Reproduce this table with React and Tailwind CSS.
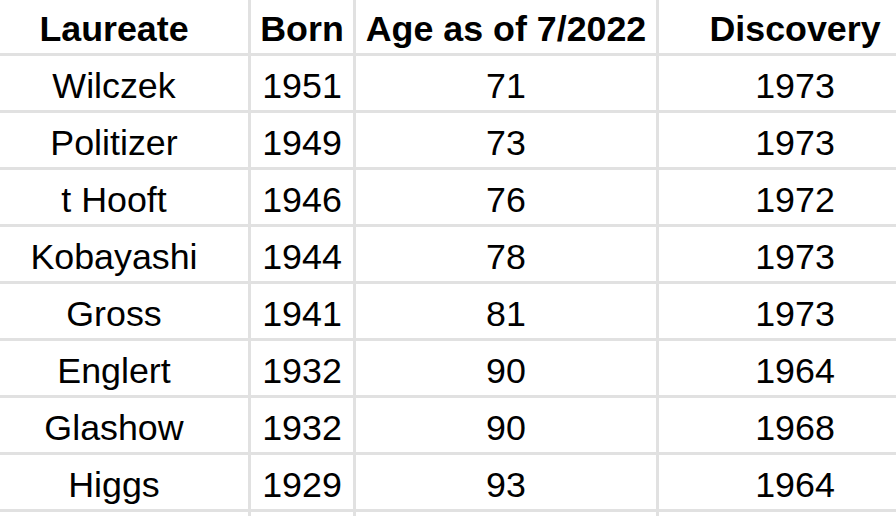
import React from "react";

const rows = [
  ["Wilczek", "1951", "71", "1973"],
  ["Politizer", "1949", "73", "1973"],
  ["t Hooft", "1946", "76", "1972"],
  ["Kobayashi", "1944", "78", "1973"],
  ["Gross", "1941", "81", "1973"],
  ["Englert", "1932", "90", "1964"],
  ["Glashow", "1932", "90", "1968"],
  ["Higgs", "1929", "93", "1964"],
];

// per-column padding so the text sits where the sheet centers it
const pads = ["pr-[20px]", "", "", "pl-[35px]"];

function Cell({ children, col, bold, h }) {
  return (
    <div className={`bg-white flex items-center justify-center pt-[7px] ${h} ${pads[col]}`}>
      <span className={`whitespace-nowrap ${bold ? "font-bold" : ""}`}>{children}</span>
    </div>
  );
}

export default function App() {
  return (
    <div className="w-[896px] h-[516px] overflow-hidden bg-white text-black text-[35.8px] leading-none font-['Liberation_Sans',Arial,sans-serif]">
      <div className="grid grid-cols-[248px_102px_300px_237px] gap-[3px] bg-[#e1e1e1]">
        {["Laureate", "Born", "Age as of 7/2022", "Discovery"].map((t, i) => (
          <Cell key={t} col={i} bold h="h-[53px]">
            {t}
          </Cell>
        ))}
        {rows.map((r) =>
          r.map((v, i) => (
            <Cell key={r[0] + i} col={i} h="h-[54px]">
              {v}
            </Cell>
          ))
        )}
        {[0, 1, 2, 3].map((i) => (
          <Cell key={"e" + i} col={i} h="h-[54px]" />
        ))}
      </div>
    </div>
  );
}
